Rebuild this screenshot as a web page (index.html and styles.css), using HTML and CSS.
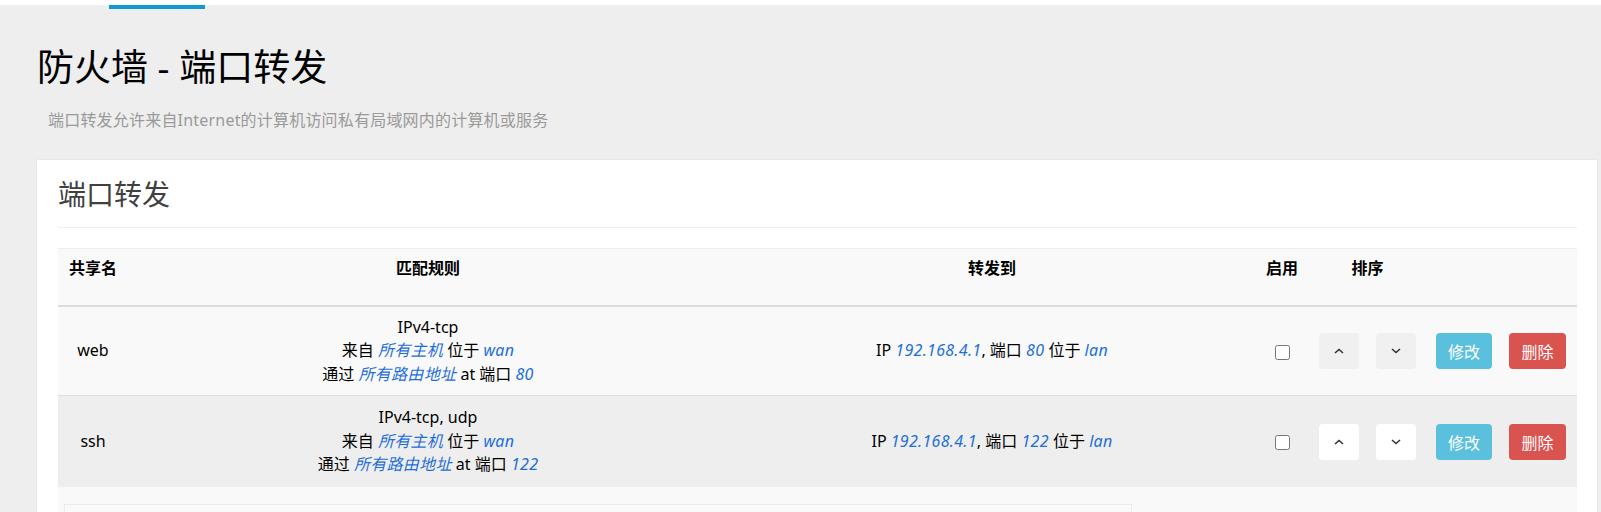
FILE: index.html
```html
<!DOCTYPE html>
<html lang="zh-CN">
<head>
<meta charset="utf-8">
<title>防火墙 - 端口转发</title>
<link rel="stylesheet" href="styles.css">
</head>
<body>
<header class="topbar"></header>
<nav class="tabline"><span class="tab-active"></span></nav>
<main class="content">
  <h2 class="page-title">防火墙 - 端口转发</h2>
  <p class="page-desc">端口转发允许来自Internet的计算机访问私有局域网内的计算机或服务</p>
  <section class="card">
    <h3 class="card-title">端口转发</h3>
    <div class="table">
      <div class="row head">
        <div class="cell c-name">共享名</div>
        <div class="cell c-match">匹配规则</div>
        <div class="cell c-fwd">转发到</div>
        <div class="cell c-en">启用</div>
        <div class="cell c-sort">排序</div>
        <div class="cell c-act"></div>
      </div>
      <div class="row r1">
        <div class="cell c-name">web</div>
        <div class="cell c-match">IPv4-tcp<br>来自 <em>所有主机</em> 位于 <em>wan</em><br>通过 <em>所有路由地址</em> at 端口 <em>80</em></div>
        <div class="cell c-fwd">IP <em>192.168.4.1</em>, 端口 <em>80</em> 位于 <em>lan</em></div>
        <div class="cell c-en"><input type="checkbox" class="chk"></div>
        <div class="cell c-sort">
          <button class="btn btn-move"><svg width="10" height="6" viewBox="0 0 10 6"><polyline points="1,5 5,1.5 9,5" fill="none" stroke="#333" stroke-width="1.6"/></svg></button>
          <button class="btn btn-move"><svg width="10" height="6" viewBox="0 0 10 6"><polyline points="1,1 5,4.5 9,1" fill="none" stroke="#333" stroke-width="1.6"/></svg></button>
        </div>
        <div class="cell c-act">
          <button class="btn btn-edit">修改</button>
          <button class="btn btn-del">删除</button>
        </div>
      </div>
      <div class="row r2">
        <div class="cell c-name">ssh</div>
        <div class="cell c-match">IPv4-tcp, udp<br>来自 <em>所有主机</em> 位于 <em>wan</em><br>通过 <em>所有路由地址</em> at 端口 <em>122</em></div>
        <div class="cell c-fwd">IP <em>192.168.4.1</em>, 端口 <em>122</em> 位于 <em>lan</em></div>
        <div class="cell c-en"><input type="checkbox" class="chk"></div>
        <div class="cell c-sort">
          <button class="btn btn-move"><svg width="10" height="6" viewBox="0 0 10 6"><polyline points="1,5 5,1.5 9,5" fill="none" stroke="#333" stroke-width="1.6"/></svg></button>
          <button class="btn btn-move"><svg width="10" height="6" viewBox="0 0 10 6"><polyline points="1,1 5,4.5 9,1" fill="none" stroke="#333" stroke-width="1.6"/></svg></button>
        </div>
        <div class="cell c-act">
          <button class="btn btn-edit">修改</button>
          <button class="btn btn-del">删除</button>
        </div>
      </div>
      <div class="create"><div class="create-box"></div></div>
    </div>
  </section>
</main>
</body>
</html>
```
FILE: styles.css
```css
html, body {
  margin: 0;
  padding: 0;
}
body {
  background: #eeeeee;
  font-family: "Noto Sans", "Noto Sans CJK SC", sans-serif;
  font-size: 16px;
  color: #000;
  overflow: hidden;
}
.topbar {
  height: 5px;
  background: #ffffff;
}
.tabline {
  display: flex;
  height: 4px;
}
.tab-active {
  display: block;
  margin-left: 109px;
  width: 96px;
  height: 4px;
  background: #0f9ad3;
}
.content {
  margin: 0 4px 0 37px;
}
.page-title {
  margin: 31px 0 0 0;
  font-size: 37px;
  line-height: 54px;
  font-weight: normal;
  color: #000;
}
.page-desc {
  margin: 14px 0 0 0;
  padding-left: 11px;
  font-size: 16px;
  line-height: 24px;
  letter-spacing: 0.2px;
  color: #9a9a9a;
}
.card {
  margin-top: 28px;
  background: #ffffff;
  box-shadow: 0 0 2px rgba(0, 0, 0, 0.08);
  padding: 0 20px 0 21px;
  height: 360px;
}
.card-title {
  margin: 0;
  padding: 14px 0 13px 0;
  font-size: 28px;
  line-height: 40px;
  font-weight: normal;
  color: #404040;
  border-bottom: 1px solid #eeeeee;
}
.table {
  margin-top: 20px;
  background: #f9f9f9;
  border-top: 1px solid #eeeeee;
}
.row {
  display: grid;
  grid-template-columns: 70px 600px 528px 52px 119px 150px;
  align-items: center;
}
.cell {
  line-height: 23.5px;
  text-align: center;
}
.head {
  height: 56px;
  align-items: start;
  border-bottom: 2px solid #dddddd;
  font-weight: bold;
}
.head .cell {
  padding-top: 7px;
  line-height: 24px;
}
.head .c-name {
  text-align: left;
  padding-left: 11px;
}
.r1 {
  height: 88px;
  background: #f9f9f9;
  border-bottom: 1px solid #dddddd;
}
.r2 {
  height: 91px;
  background: #eeeeee;
}
em {
  font-style: italic;
  color: #1f6fd8;
  letter-spacing: 0.3px;
}
.c-en {
  display: flex;
  justify-content: center;
}
.chk {
  width: 15px;
  height: 15px;
  margin: 2px 0 0 0;
}
.c-sort {
  display: flex;
  justify-content: center;
  gap: 17px;
}
.c-act {
  display: flex;
  justify-content: flex-end;
  gap: 17px;
  padding-right: 11px;
}
.btn {
  border: none;
  border-radius: 4px;
  height: 36px;
  padding: 0;
  font-family: "Noto Sans", "Noto Sans CJK SC", sans-serif;
  font-size: 16px;
  display: flex;
  align-items: center;
  justify-content: center;
}
.btn-move {
  width: 40px;
  background: #f0f0f0;
}
.r2 .btn-move {
  background: #ffffff;
}
.btn-edit {
  width: 56px;
  background: #5bc0de;
  color: #ffffff;
}
.btn-del {
  width: 57px;
  background: #d9534f;
  color: #ffffff;
}
.create {
  padding: 17px 0 0 6px;
  height: 60px;
}
.create-box {
  width: 1066px;
  height: 40px;
  border: 1px solid #ebebeb;
  background: #fafafa;
}
```
